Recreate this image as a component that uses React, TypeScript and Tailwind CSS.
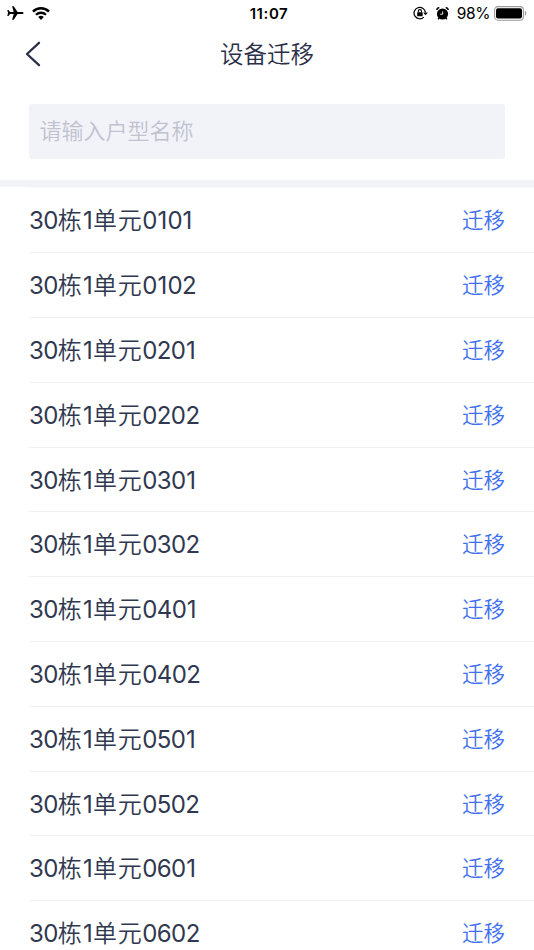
type Unit = {
  id: string;
  name: string;
};

const units: Unit[] = [
  "0101",
  "0102",
  "0201",
  "0202",
  "0301",
  "0302",
  "0401",
  "0402",
  "0501",
  "0502",
  "0601",
  "0602",
].map((room) => ({ id: room, name: `30栋1单元${room}` }));

const PlaneIcon = () => (
  <svg width="17" height="14" viewBox="0 0 17 14" fill="#000">
    <path d="M16.6 7c0-.7-.8-1.1-1.8-1.1h-4.2L6.7.2H5.1l1.6 5.7H3L1.5 4.1H.3L1 7l-.7 2.9h1.2L3 8.1h3.7l-1.6 5.7h1.6l3.9-5.7h4.2c1 0 1.8-.4 1.8-1.1z" />
  </svg>
);

const WifiIcon = () => (
  <svg width="18" height="13" viewBox="0 0 18 13" fill="none" stroke="#000">
    <path d="M1 4.6a11.4 11.4 0 0 1 16 0" strokeWidth="2.5" />
    <path d="M4 7.8a7.1 7.1 0 0 1 10 0" strokeWidth="2.3" />
    <path d="M9 13 6.2 10.1a4 4 0 0 1 5.6 0z" fill="#000" stroke="none" />
  </svg>
);

const RotationLockIcon = () => (
  <svg width="15" height="14" viewBox="0 0 15 14" fill="none" stroke="#000">
    <path d="M10.8 11.1A5.7 5.7 0 1 1 12.4 6.4" strokeWidth="1.2" />
    <path d="M10.2 6.4h4.6l-2.3 2.9z" fill="#000" stroke="none" />
    <rect x="4.2" y="6.2" width="5.4" height="4" rx=".5" fill="#000" stroke="none" />
    <path d="M5.3 6.6V5.2a1.6 1.6 0 0 1 3.2 0v1.4" strokeWidth="1.1" />
  </svg>
);

const AlarmIcon = () => (
  <svg width="13" height="13" viewBox="0 0 13 13" fill="none" stroke="#000">
    <circle cx="6.5" cy="7" r="5.6" fill="#000" stroke="none" />
    <path d="M.9 3A2 2 0 0 1 3.3.9M12.1 3A2 2 0 0 0 9.7.9" strokeWidth="1.5" />
    <path d="m3.2 10.9-1 1.4M9.8 10.9l1 1.4" strokeWidth="1.6" />
    <path d="M6.7 4.3v2.9H4.2" stroke="#fff" strokeWidth=".9" />
  </svg>
);

const BatteryIcon = () => (
  <svg width="33" height="15" viewBox="0 0 33 15">
    <rect x=".6" y=".6" width="28.8" height="13.6" rx="3.4" fill="none" stroke="#9a9a9a" strokeWidth="1.1" />
    <rect x="2" y="2.2" width="26" height="10.4" rx="2" fill="#000" />
    <path d="M30.9 5.1c1.8.7 1.8 3.9 0 4.6z" fill="#9a9a9a" />
  </svg>
);

const StatusBar = () => (
  <div className="grid h-7 grid-cols-3 items-center px-[7px] text-black">
    <div className="flex items-center gap-2 pb-0.5">
      <PlaneIcon />
      <WifiIcon />
    </div>
    <p className="pb-px pl-1 text-center text-[15px] leading-none font-semibold tracking-[0.6px]">
      11:07
    </p>
    <div className="flex items-center justify-end pb-0.5">
      <RotationLockIcon />
      <span className="ml-2">
        <AlarmIcon />
      </span>
      <span className="ml-2 pt-0.5 text-[15.5px] leading-none tracking-[-0.4px]">
        98%
      </span>
      <span className="ml-1">
        <BatteryIcon />
      </span>
    </div>
  </div>
);

const Header = () => (
  <header className="grid h-[52px] grid-cols-[60px_1fr_60px] items-center text-[#2b2f49]">
    <button className="pl-[25px]" aria-label="返回">
      <svg width="16" height="26" viewBox="0 0 16 26" fill="none" stroke="currentColor" strokeWidth="2.3" strokeLinecap="round" strokeLinejoin="round">
        <path d="M14 1.8 2 13l12 11.2" />
      </svg>
    </button>
    <h1 className="pt-[2px] text-center text-[23.5px] leading-none font-[350]">
      设备迁移
    </h1>
  </header>
);

// Digits sit a little tighter than the characters, except for the narrow "1"
const UnitName = ({ name }: { name: string }) => (
  <span className="pt-[2.2px] pl-[0.4px] text-2xl font-[350] tracking-[0.6px] whitespace-nowrap text-[#303850]">
    {name.split(/(\d)/).map((part, i) => {
      if (part === "1") {
        return (
          <span key={i} className="ml-[0.6px] font-normal tracking-[0.3px]">
            {part}
          </span>
        );
      }
      return (
        <span
          key={i}
          className={/\d/.test(part) ? "font-normal tracking-[-0.6px]" : ""}
        >
          {part}
        </span>
      );
    })}
  </span>
);

const UnitRow = ({ unit }: { unit: Unit }) => (
  <li className="flex h-[64.8px] items-center justify-between border-b border-[#f0f1f4] pr-[29px]">
    <UnitName name={unit.name} />
    <button className="pt-[0.6px] text-[21.5px] font-[350] text-[#3f70ee]">
      迁移
    </button>
  </li>
);

export default function App() {
  return (
    <div className="h-[950px] w-full overflow-hidden bg-white font-[Inter,'Noto_Sans_CJK_SC_DemiLight','Noto_Sans_CJK_SC',sans-serif]">
      <StatusBar />
      <Header />
      <div className="px-[28.6px] pt-[24.4px] pb-[21.4px]">
        <input
          className="block h-[54.2px] w-full rounded-[3px] bg-[#f2f3f9] px-[11px] pb-px text-[22px] font-[350] outline-none placeholder:text-[#c1c2cf]"
          placeholder="请输入户型名称"
        />
      </div>
      <div className="h-[7px] bg-[#f2f3f9]" />
      <ul className="ml-[28.6px]">
        <li className="h-[1.4px] bg-[#f8f9fc]" />
        {units.map((unit) => (
          <UnitRow key={unit.id} unit={unit} />
        ))}
      </ul>
    </div>
  );
}
